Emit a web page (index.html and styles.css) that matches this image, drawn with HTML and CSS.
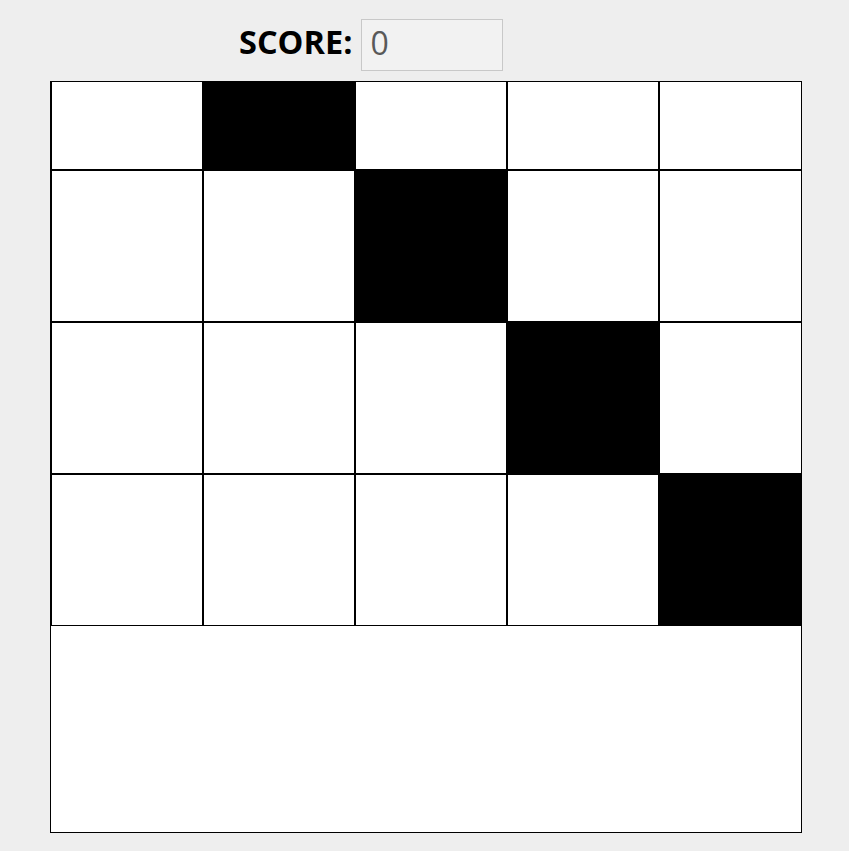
FILE: index.html
```html
<!DOCTYPE html>
<html>
<head>
<meta charset="utf-8">
<link rel="stylesheet" href="styles.css">
</head>
<body>
<div class="page">
  <div class="header">
    <label class="score-label" for="score">SCORE:</label>
    <input class="score-input" id="score" type="text" value="0" readonly>
  </div>
  <div class="board">
    <div class="track">
      <div class="row"><div class="cell"></div><div class="cell black"></div><div class="cell"></div><div class="cell"></div><div class="cell"></div></div>
      <div class="row"><div class="cell"></div><div class="cell"></div><div class="cell black"></div><div class="cell"></div><div class="cell"></div></div>
      <div class="row"><div class="cell"></div><div class="cell"></div><div class="cell"></div><div class="cell black"></div><div class="cell"></div></div>
      <div class="row"><div class="cell"></div><div class="cell"></div><div class="cell"></div><div class="cell"></div><div class="cell black"></div></div>
    </div>
  </div>
</div>
</body>
</html>
```
FILE: styles.css
```css
html, body {
  margin: 0;
  padding: 0;
  background: #eeeeee;
}
.page {
  padding-top: 19px;
  font-family: "Open Sans", "Noto Sans", sans-serif;
}
.header {
  display: flex;
  align-items: center;
  height: 52px;
  padding-left: 239px;
  margin-bottom: 10px;
}
.score-label {
  font-weight: 700;
  font-size: 32.5px;
  line-height: 1;
  color: #000;
  margin-right: 9px;
  margin-bottom: 6px;
}
.score-input {
  box-sizing: border-box;
  width: 142px;
  height: 52px;
  border: 1px solid #c8c8c8;
  background: #f2f2f2;
  font-family: "Open Sans", "Noto Sans", sans-serif;
  font-size: 32px;
  color: #595959;
  padding: 0 8px 6px 8px;
  outline: none;
}
.board {
  box-sizing: border-box;
  margin-left: 50px;
  width: 752px;
  height: 752px;
  border: 1px solid #000;
  background: #fff;
  overflow: hidden;
}
.track {
  margin-top: -64px;
  display: flex;
  flex-direction: column;
}
.row {
  display: flex;
  flex: none;
}
.cell {
  flex: none;
  width: 150px;
  height: 150px;
  border: 1px solid #000;
  background: #fff;
}
.cell.black {
  background: #000;
}
```
